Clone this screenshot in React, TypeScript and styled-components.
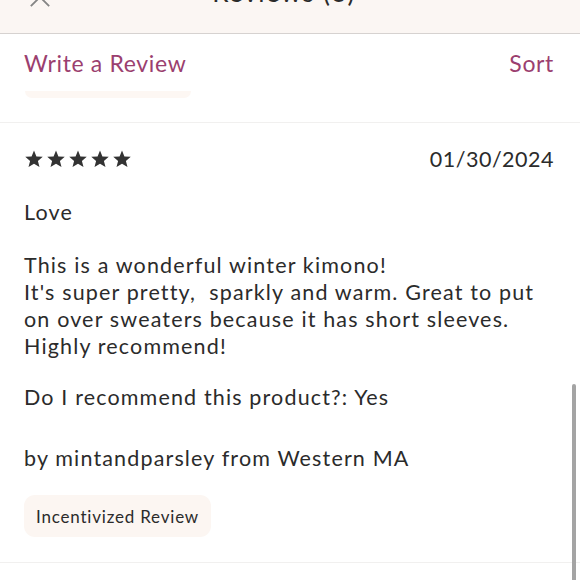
import styled, { createGlobalStyle } from "styled-components"

const Global = createGlobalStyle`
  html, body { margin: 0; padding: 0; background: #fff; }
  body { font-family: Lato, "Noto Sans", sans-serif; color: #2b2b2b; overflow: hidden; }
`

const Page = styled.div`
  position: relative;
  width: 580px;
  height: 580px;
  overflow: hidden;
`

const Header = styled.div`
  height: 33px;
  background: #fbf6f3;
  border-bottom: 1px solid #d6d2d0;
  display: flex;
  align-items: flex-end;
  justify-content: center;
  position: relative;
`

const Title = styled.div`
  font-size: 26px;
  letter-spacing: 1.3px;
  line-height: 1;
  color: #2b2b2b;
  margin-bottom: 28px;
  margin-right: 12px;
`

const Close = styled.svg`
  position: absolute;
  left: 28px;
  top: -14px;
`

const Actions = styled.div`
  display: flex;
  justify-content: space-between;
  align-items: center;
  padding: 14px 26px 0 24px;
  height: 30px;
`

const Link = styled.span`
  font-size: 23px;
  letter-spacing: 0.65px;
  color: #9b3f6f;
`

const Ghost = styled.div`
  margin: 13px 0 0 25px;
  width: 166px;
  height: 7px;
  border-radius: 0 0 8px 8px;
  background: #fdf7f3;
`

const Divider = styled.div`
  height: 1px;
  background: #f1f0ef;
  margin-top: ${(p: { $top: number }) => p.$top}px;
`

const Review = styled.div`
  padding: 24px 26px 0 24px;
  font-size: 21.5px;
  letter-spacing: 1.15px;
  color: #2b2b2b;
`

const Meta = styled.div`
  display: flex;
  justify-content: space-between;
  align-items: center;
  height: 24px;
`

const Stars = styled.div`
  display: flex;
  gap: 2px;
`

const Date = styled.span`
  font-size: 21.5px;
  letter-spacing: 0.5px;
`

const Headline = styled.div`
  margin-top: 28px;
  line-height: 27px;
`

const Body = styled.div`
  margin-top: 26px;
  line-height: 27px;
  white-space: pre-wrap;
`

const Line = styled.div`
  line-height: 27px;
  margin-top: ${(p: { $top: number }) => p.$top}px;
`

const Badge = styled.div`
  display: inline-flex;
  align-items: center;
  margin-top: 23px;
  height: 42px;
  padding: 0 12px;
  border-radius: 11px;
  background: #fcf6f2;
  font-size: 17px;
  letter-spacing: 0.8px;
`

const Scroll = styled.div`
  position: absolute;
  right: 4px;
  top: 384px;
  width: 4px;
  height: 200px;
  border-radius: 2px;
  background: #a4a4a4;
`

function Star() {
  return (
    <svg width="20" height="20" viewBox="0 0 24 24">
      <path d="M12 1.8l2.9 7.1 7.6.5-5.8 4.9 1.9 7.4L12 17.6l-6.6 4.1 1.9-7.4-5.8-4.9 7.6-.5z" fill="#333" />
    </svg>
  )
}

export default function App() {
  return (
    <Page>
      <Global />
      <Header>
        <Title>Reviews (3)</Title>
        <Close width="24" height="22" viewBox="0 0 24 24">
          <path d="M2 2l20 20M22 2L2 22" stroke="#858585" strokeWidth="2" fill="none" />
        </Close>
      </Header>
      <Actions>
        <Link>Write a Review</Link>
        <Link>Sort</Link>
      </Actions>
      <Ghost />
      <Divider $top={24} />
      <Review>
        <Meta>
          <Stars>
            {[0, 1, 2, 3, 4].map(i => <Star key={i} />)}
          </Stars>
          <Date>01/30/2024</Date>
        </Meta>
        <Headline>Love</Headline>
        <Body>{"This is a wonderful winter kimono!\nIt's super pretty,  sparkly and warm. Great to put on over sweaters because it has short sleeves.\nHighly recommend!"}</Body>
        <Line $top={24}>Do I recommend this product?: Yes</Line>
        <Line $top={34}>by mintandparsley from Western MA</Line>
        <Badge>Incentivized Review</Badge>
      </Review>
      <Divider $top={25} />
      <Scroll />
    </Page>
  )
}
